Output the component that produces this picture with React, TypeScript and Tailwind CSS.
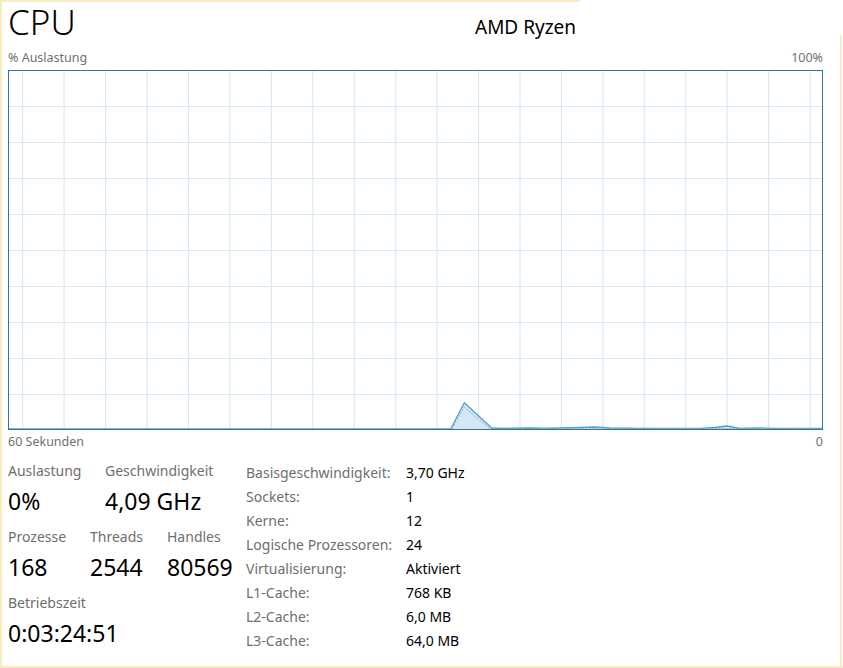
import React from "react";

const font = { fontFamily: '"Segoe UI", "Noto Sans", "Open Sans", sans-serif' };

function Chart() {
  const W = 813;
  const H = 358;
  const vx: number[] = [];
  for (let x = 13.7; x < W; x += 41.44) vx.push(x);
  const hy: number[] = [];
  for (let i = 1; i < 10; i++) hy.push(35 + (i - 1) * 36);
  const pts: [number, number][] = [
    [0, 358],
    [441.7, 358],
    [455.3, 331.7],
    [482.7, 357],
    [491, 357.5],
    [521, 357],
    [536, 357.5],
    [551, 357],
    [571, 356.5],
    [586, 356],
    [601, 357],
    [631, 357.5],
    [691, 357.5],
    [706, 356.5],
    [718, 355],
    [731, 357.5],
    [751, 357],
    [766, 357.5],
    [813, 357.5],
  ];
  const line = pts.map((p) => p.join(",")).join(" ");
  const area = `0,${H} ${line} ${W},${H}`;
  const kernel: [number, number][] = [
    [443, 358],
    [455, 336],
    [480, 357],
    [813, 357.8],
  ];
  return (
    <svg width={W} height={H} className="block">
      {vx.map((x) => (
        <line key={"v" + x} x1={x} y1={0} x2={x} y2={H} stroke="#d9e9f3" strokeWidth={1.2} />
      ))}
      {hy.map((y) => (
        <line key={"h" + y} x1={0} y1={y + 0.5} x2={W} y2={y + 0.5} stroke="#d9e9f3" strokeWidth={1.2} />
      ))}
      <polygon points={area} fill="#d6e6f2" />
      <polyline points={line} fill="none" stroke="#5d9cc6" strokeWidth={1.3} strokeLinejoin="round" />
      <polyline
        points={kernel.map((p) => p.join(",")).join(" ")}
        fill="none"
        stroke="#7fb2d3"
        strokeWidth={1}
        strokeDasharray="2 1.5"
      />
    </svg>
  );
}

function Stat({ label, value, className = "" }: { label: string; value: string; className?: string }) {
  return (
    <div className={"flex flex-col " + className}>
      <div className="text-[14px] leading-[18px] text-[#6e6e6e]">{label}</div>
      <div className="text-[23px] leading-[24px] mt-[9px] text-black">{value}</div>
    </div>
  );
}

const rows: [string, string][] = [
  ["Basisgeschwindigkeit:", "3,70 GHz"],
  ["Sockets:", "1"],
  ["Kerne:", "12"],
  ["Logische Prozessoren:", "24"],
  ["Virtualisierung:", "Aktiviert"],
  ["L1-Cache:", "768 KB"],
  ["L2-Cache:", "6,0 MB"],
  ["L3-Cache:", "64,0 MB"],
];

export default function App() {
  return (
    <div className="relative w-[843px] h-[668px] bg-white overflow-hidden" style={font}>
      <div className="absolute left-0 top-0 w-[580px] h-[2px] bg-[#f8ebbd]" />
      <div className="absolute left-0 top-0 w-[2px] h-[668px] bg-[#f8ebbd]" />
      <div className="absolute left-0 bottom-0 w-[843px] h-[2px] bg-[#f8ebbd]" />
      <div className="absolute right-[1px] top-[35px] w-[2px] h-[633px] bg-[#f8ebbd]" />

      <div className="flex flex-col pl-[8px] pr-[20px]">
        <div className="flex items-start h-[50px]">
          <div className="w-[467px] text-[35px] leading-[44px] text-black font-light">CPU</div>
          <div className="text-[19px] leading-[24px] text-black mt-[15px]">AMD Ryzen</div>
        </div>
        <div className="flex justify-between text-[12.5px] leading-[16px] pb-[4px] text-[#707070] w-[815px]">
          <span>% Auslastung</span>
          <span>100%</span>
        </div>
        <div className="w-[815px] h-[360px] border border-[#2f73a0]">
          <Chart />
        </div>
        <div className="flex justify-between text-[12.5px] leading-[24px] text-[#707070] w-[815px]">
          <span>60 Sekunden</span>
          <span>0</span>
        </div>

        <div className="flex mt-[8px]">
          <div className="flex flex-col w-[238px] gap-[15px]">
            <div className="flex">
              <Stat label="Auslastung" value="0%" className="w-[97px]" />
              <Stat label="Geschwindigkeit" value="4,09 GHz" />
            </div>
            <div className="flex">
              <Stat label="Prozesse" value="168" className="w-[82px]" />
              <Stat label="Threads" value="2544" className="w-[77px]" />
              <Stat label="Handles" value="80569" />
            </div>
            <Stat label="Betriebszeit" value="0:03:24:51" />
          </div>
          <div className="flex flex-col text-[14px] leading-[24px] -mt-[1px]">
            {rows.map(([k, v]) => (
              <div key={k} className="flex">
                <div className="w-[160px] text-[#6e6e6e]">{k}</div>
                <div className="text-black">{v}</div>
              </div>
            ))}
          </div>
        </div>
      </div>
    </div>
  );
}
